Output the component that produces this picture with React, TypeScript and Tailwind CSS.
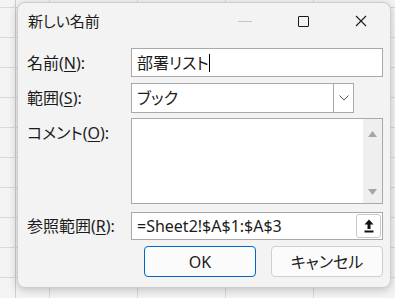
import React from "react";

const font = {
  fontFamily: "'Noto Sans', 'Noto Sans CJK JP', sans-serif",
  fontFeatureSettings: "'palt'",
};

function Label({ text, k }: { text: string; k: string }) {
  return (
    <span className="block w-[104px] shrink-0 text-[16px] text-[#1b1b1b] leading-none whitespace-nowrap">
      {text}(<span className="underline underline-offset-2">{k}</span>):
    </span>
  );
}

export default function App() {
  return (
    <div
      style={font}
      className="relative w-[395px] h-[298px] overflow-hidden pt-[2px] pl-[17px] bg-[#f4f4f4] [background-image:linear-gradient(to_bottom,#d9d9d9_1px,transparent_1px),linear-gradient(to_right,#d9d9d9_1px,transparent_1px),linear-gradient(to_right,transparent_15px,#cfcfcf_15px,#cfcfcf_16px,transparent_16px)] [background-size:100%_30px,88px_100%,100%_100%] [background-position:0_7px,49px_0,0_0]"
    >
      <div className="w-[374px] h-[286px] flex flex-col rounded-[8px] border border-[#cdcdcd] bg-[#f3f3f3] shadow-[0_2px_10px_rgba(0,0,0,0.22)]">
        {/* title bar */}
        <div className="h-[36px] flex items-center shrink-0">
          <span className="pl-[10px] text-[15px] text-[#1b1b1b]">新しい名前</span>
          <div className="ml-auto flex h-full">
            <div className="w-[58px] h-full flex items-center justify-center">
              <div className="w-[14px] h-px bg-[#c4c4c4]" />
            </div>
            <div className="w-[58px] h-full flex items-center justify-center">
              <div className="w-[11px] h-[11px] border border-[#1b1b1b] rounded-[1px]" />
            </div>
            <div className="w-[58px] h-full flex items-center justify-center">
              <svg width="12" height="12" viewBox="0 0 12 12">
                <path d="M1 1 L11 11 M11 1 L1 11" stroke="#1b1b1b" strokeWidth="1.1" />
              </svg>
            </div>
          </div>
        </div>

        <div className="flex flex-col pl-[9px] pr-[7px] mt-[9px]">
          {/* name */}
          <div className="flex items-center h-[29px]">
            <Label text="名前" k="N" />
            <div className="flex-1 h-full bg-white border border-[#a9a9a9] flex items-center pl-[5px]">
              <span className="text-[16px] text-[#1b1b1b]">部署リスト</span>
              <span className="w-px h-[18px] bg-black" />
            </div>
          </div>

          {/* scope */}
          <div className="flex items-center h-[30px] mt-[6px]">
            <Label text="範囲" k="S" />
            <div className="w-[223px] h-full bg-white border border-[#a9a9a9] flex items-center">
              <span className="flex-1 pl-[5px] text-[16px] text-[#1b1b1b]">ブック</span>
              <div className="w-[21px] h-[30px] -my-px -mr-px border border-[#a9a9a9] bg-white flex items-center justify-center">
                <svg width="10" height="6" viewBox="0 0 10 6">
                  <path d="M0.5 0.5 L5 5 L9.5 0.5" fill="none" stroke="#555" strokeWidth="1" />
                </svg>
              </div>
            </div>
          </div>

          {/* comment */}
          <div className="flex h-[86px] mt-[5px]">
            <div className="pt-[7px] shrink-0">
              <Label text="コメント" k="O" />
            </div>
            <div className="flex-1 h-full bg-white border border-[#a9a9a9] flex justify-end">
              <div className="w-[19px] h-full bg-[#efefef] flex flex-col items-center justify-between pt-[12px] pb-[8px]">
                <svg width="9" height="6" viewBox="0 0 9 6">
                  <path d="M4.5 0 L9 6 L0 6 Z" fill="#a6a6a6" />
                </svg>
                <svg width="9" height="6" viewBox="0 0 9 6">
                  <path d="M0 0 L9 0 L4.5 6 Z" fill="#a6a6a6" />
                </svg>
              </div>
            </div>
          </div>

          {/* refers to */}
          <div className="flex items-center h-[28px] mt-[8px]">
            <Label text="参照範囲" k="R" />
            <div className="flex-1 h-full bg-white border border-[#a9a9a9] flex items-center pl-[5px] pr-px">
              <span className="flex-1 text-[16px] text-[#1b1b1b]">=Sheet2!$A$1:$A$3</span>
              <div className="w-[25px] h-[24px] border border-[#c9c9c9] rounded-[3px] bg-white flex items-center justify-center">
                <svg width="10" height="14" viewBox="0 0 10 14">
                  <path d="M5 0.5 L9.5 5.5 L6.5 5.5 L6.5 10 L3.5 10 L3.5 5.5 L0.5 5.5 Z" fill="#111" />
                  <rect x="0.5" y="11.5" width="9" height="2" fill="#111" />
                </svg>
              </div>
            </div>
          </div>

          {/* buttons */}
          <div className="flex justify-end gap-[15px] h-[31px] mt-[6px]">
            <button className="w-[112px] h-full rounded-[4px] border border-[#0067c0] bg-[#fbfbfb] text-[16px] text-[#1b1b1b]">
              OK
            </button>
            <button className="w-[112px] h-full rounded-[4px] border border-[#d0d0d0] bg-[#fbfbfb] text-[16px] text-[#1b1b1b]">
              キャンセル
            </button>
          </div>
        </div>
      </div>
    </div>
  );
}
